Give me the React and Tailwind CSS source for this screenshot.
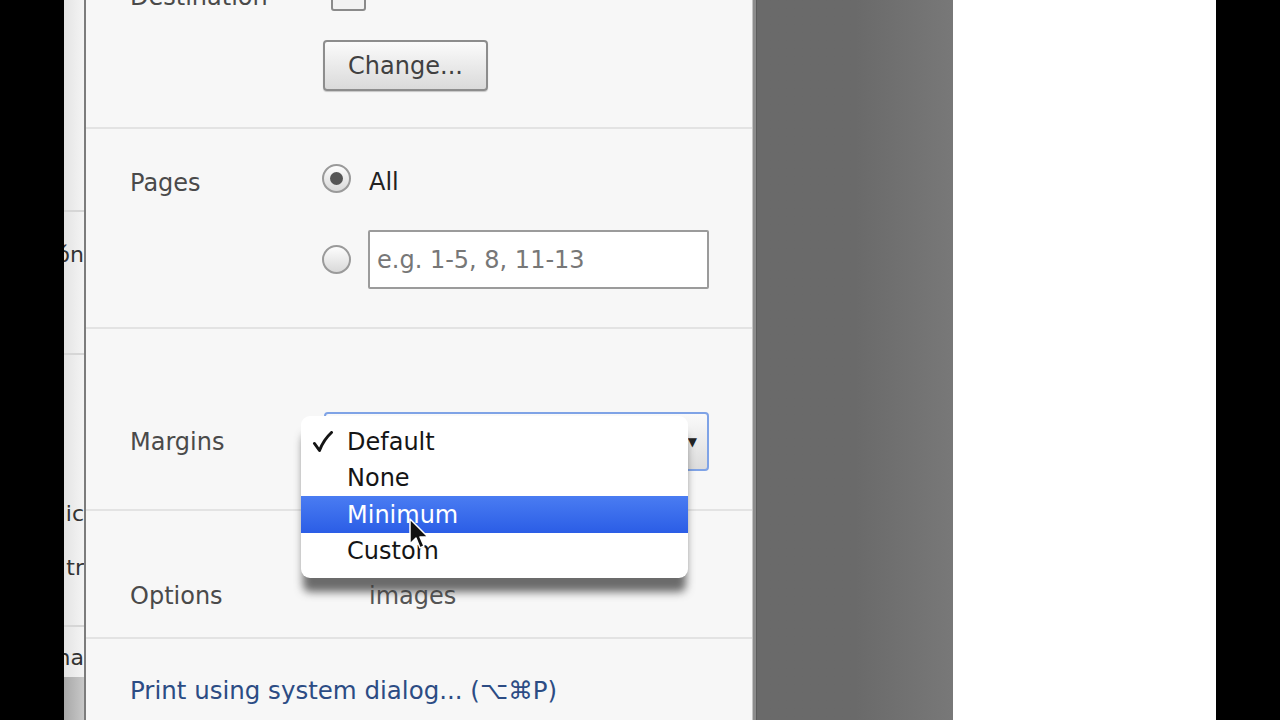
import React from "react";

const F = { fontFamily: '"DejaVu Sans", "Liberation Sans", sans-serif' };

function Radio({ checked }) {
  return (
    <div className="w-[29px] h-[29px] rounded-full border-2 border-[#9a9a9a] bg-gradient-to-b from-[#fdfdfd] to-[#d9d9d9] flex items-center justify-center shrink-0">
      {checked && <div className="w-[13px] h-[13px] rounded-full bg-[#555]" />}
    </div>
  );
}

function Cursor() {
  return (
    <svg width="22" height="34" viewBox="0 0 22 34" className="absolute left-[107px] top-[101px]">
      <path d="M2 2 L2 27 L8 21 L12 31 L16 29 L12 20 L20 20 Z" fill="#111" stroke="#fff" strokeWidth="1.5" strokeLinejoin="round" />
    </svg>
  );
}

function Check() {
  return (
    <svg width="22" height="22" viewBox="0 0 22 22" className="absolute left-[11px] top-[7px]">
      <path d="M2.5 12.5 L7.5 19.5 C10 13 14 6.5 19.5 1.5" fill="none" stroke="#151515" strokeWidth="3" strokeLinecap="round" strokeLinejoin="round" />
    </svg>
  );
}

export default function App() {
  return (
    <div className="w-[1280px] h-[720px] flex overflow-hidden bg-black" style={F}>
      <div className="w-[64px] h-full bg-black shrink-0" />
      {/* left strip */}
      <div className="w-[22px] h-full shrink-0 bg-gradient-to-r from-[#e4e4e4] to-[#f4f4f4] border-r-2 border-[#7c7c7c] flex flex-col overflow-hidden text-[22px] text-[#333] leading-none">
        <div className="h-[212px] border-b-2 border-[#d6d6d6] shrink-0" />
        <div className="h-[143px] border-b-2 border-[#d6d6d6] shrink-0 flex justify-end pt-[32px]">
          <span className="whitespace-nowrap">ón</span>
        </div>
        <div className="h-[272px] border-b-2 border-[#d6d6d6] shrink-0 flex flex-col items-end pt-[148px] gap-[32px]">
          <span className="whitespace-nowrap">ic</span>
          <span className="whitespace-nowrap">tr</span>
        </div>
        <div className="h-[50px] shrink-0 flex justify-end pt-[20px]">
          <span className="whitespace-nowrap">na</span>
        </div>
        <div className="flex-1 bg-gradient-to-r from-[#a8a8a8] to-[#c8c8c8]" />
      </div>
      {/* settings panel */}
      <div className="w-[666px] h-full shrink-0 bg-[#f7f7f7] relative flex flex-col">
        {/* Destination */}
        <div className="h-[129px] shrink-0 border-b-2 border-[#e3e3e3] pl-[44px]">
          <div className="flex items-center h-[28px] mt-[-17px]">
            <div className="w-[192px] shrink-0 whitespace-nowrap text-[24px] text-[#4a4a4a]">Destination</div>
            <div className="ml-[9px] w-[35px] h-[28px] rounded-[3px] border-2 border-[#8a8a8a] bg-[#f2f2f2]" />
          </div>
          <div className="ml-[193px] mt-[29px] w-[165px] h-[51px] rounded-[4px] border-2 border-[#8d8d8d] bg-gradient-to-b from-[#fbfbfb] to-[#dadada] flex items-center justify-center text-[24px] text-[#404040] shadow-[0_1px_1px_rgba(0,0,0,0.2)]">
            Change...
          </div>
        </div>
        {/* Pages */}
        <div className="h-[200px] shrink-0 border-b-2 border-[#e3e3e3] pl-[44px] pt-[34px] flex">
          <div className="w-[192px] text-[24px] text-[#4a4a4a] h-[30px] leading-[30px] mt-[5px]">Pages</div>
          <div className="flex flex-col">
            <div className="flex items-center h-[30px]">
              <Radio checked />
              <span className="ml-[18px] mt-[7px] text-[24px] text-[#222] leading-none">All</span>
            </div>
            <div className="flex items-center mt-[37px]">
              <Radio />
              <div className="ml-[17px] w-[341px] h-[59px] border-2 border-[#9b9b9b] rounded-[2px] bg-white flex items-center pl-[7px] text-[24px] text-[#777]">
                e.g. 1-5, 8, 11-13
              </div>
            </div>
          </div>
        </div>
        {/* Margins */}
        <div className="h-[182px] shrink-0 border-b-2 border-[#e3e3e3] pl-[44px] pt-[83px] flex">
          <div className="w-[194px] h-[59px] flex items-center text-[24px] text-[#4a4a4a]">Margins</div>
          <div className="w-[385px] h-[59px] rounded-[4px] border-2 border-[#7fa3e6] bg-gradient-to-b from-[#fafafa] to-[#dcdcdc] flex items-center justify-end pr-[10px]">
            <span className="text-[12px] text-[#222]">▼</span>
          </div>
        </div>
        {/* Options */}
        <div className="h-[128px] shrink-0 border-b-2 border-[#e3e3e3] pl-[44px] flex items-start pt-[34px]">
          <div className="w-[192px] text-[24px] text-[#4a4a4a] mt-[34px] leading-[34px]">Options</div>
          <div className="flex">
            <div className="w-[28px] h-[28px] mt-[4px] rounded-[3px] border-2 border-[#9a9a9a] bg-white" />
            <div className="ml-[19px] text-[24px] text-[#555] leading-[34px]">
              <div>Background colors and</div>
              <div>images</div>
            </div>
          </div>
        </div>
        {/* Print link */}
        <div className="flex-1 pl-[44px] pt-[34px]">
          <span className="text-[24.5px] text-[#2c4c84] whitespace-nowrap">Print using system dialog... (⌥⌘P)</span>
        </div>
        {/* dropdown menu overlay */}
        <div className="absolute left-[215px] top-[416px] w-[387px] h-[162px] bg-white rounded-[9px] pt-[8px] shadow-[0_16px_8px_-2px_rgba(60,60,60,0.75)] text-[24px] text-[#151515]">
          <div className="h-[36px] flex items-center relative">
            <Check />
            <span className="ml-[46px]">Default</span>
          </div>
          <div className="h-[36px] flex items-center"><span className="ml-[46px]">None</span></div>
          <div className="h-[37px] flex items-center bg-gradient-to-b from-[#4a7cf2] to-[#2b5de6] text-white"><span className="ml-[46px]">Minimum</span></div>
          <div className="h-[36px] flex items-center"><span className="ml-[46px]">Custom</span></div>
          <Cursor />
        </div>
      </div>
      {/* divider */}
      <div className="w-[5px] h-full shrink-0 bg-[#8c8c8c] border-l border-[#c4c4c4] border-r border-r-[#5c5c5c]" />
      {/* gray preview area */}
      <div className="w-[196px] h-full shrink-0 bg-gradient-to-r from-[#6a6a6a] via-[#6a6a6a] to-[#787878]" />
      {/* white page */}
      <div className="w-[263px] h-full shrink-0 bg-white" />
      <div className="flex-1 h-full bg-black" />
    </div>
  );
}
